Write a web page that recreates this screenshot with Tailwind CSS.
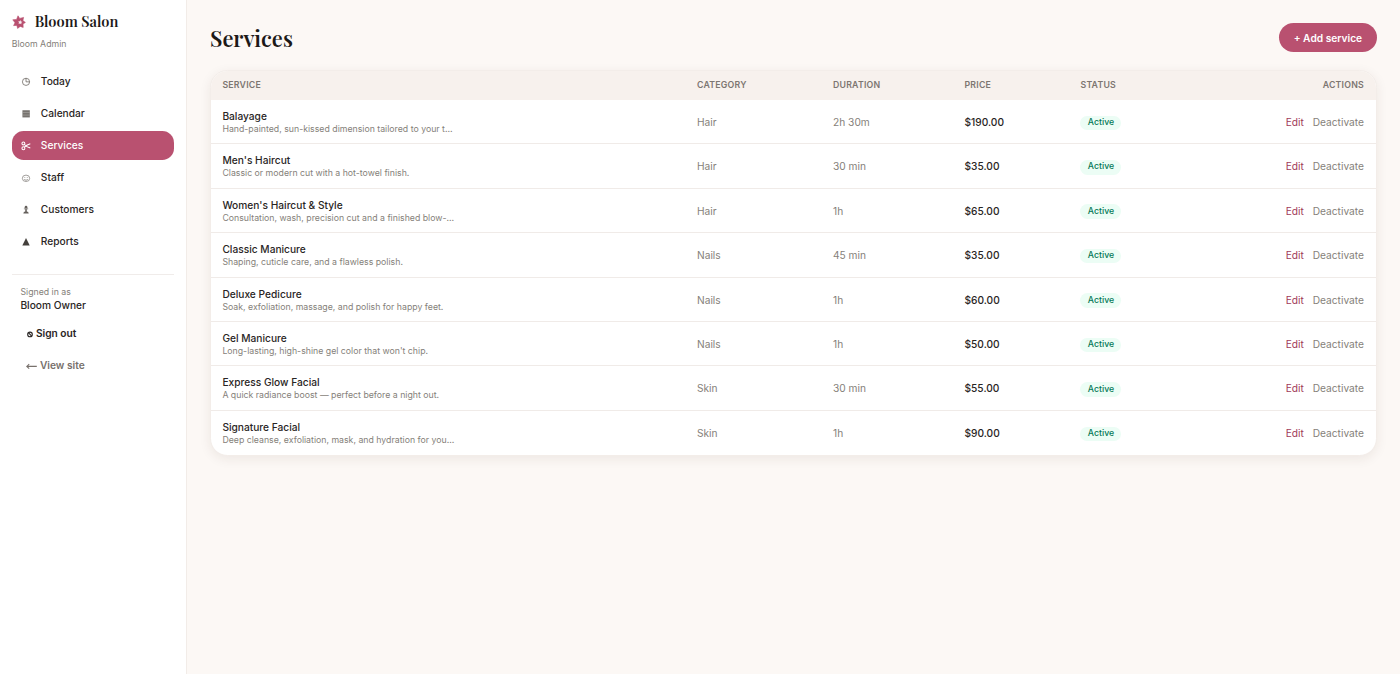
<!DOCTYPE html>
<html lang="en" class="text-[11.6667px]">
<head>
  <meta charset="UTF-8" />
  <meta name="viewport" content="width=device-width, initial-scale=1.0" />
  <title>Services · Bloom Salon</title>
  <script src="https://cdn.jsdelivr.net/npm/@tailwindcss/browser@4"></script>
</head>
<body class="flex h-screen overflow-hidden bg-[#fcf8f5] font-['Inter',sans-serif] text-sm text-[#292524]">

  <!-- Sidebar -->
  <aside class="flex w-64 shrink-0 flex-col border-r border-[#f2ece8] bg-white px-4 pt-4">
    <div class="mt-[3px] flex h-[14px] items-center gap-[9px]">
      <svg class="size-[14px] shrink-0" viewBox="0 0 14 14">
        <path d="M6 .8 7.7 3.4 11.6 2.4 10.9 5.6 13.4 7.4 11 9 11.2 12.4 8.2 11.4 5.6 13.4 4.9 10.4 1.6 10.6 3 7.8.8 4.8 4.6 4.4Z" fill="#b95170" stroke="#b95170" stroke-width=".6" stroke-linejoin="round" />
        <path d="M8.3 4.9 8.9 6.4 10.4 6.8 9.3 7.8 9.3 9.2 8 8.5 6.6 8.9 7 7.4 6.1 6.4 7.7 6.3Z" fill="#fff" opacity=".9" />
      </svg>
      <span class="whitespace-nowrap font-['Playfair_Display',serif] text-xl font-semibold leading-none text-[#1c1917]">Bloom Salon</span>
    </div>
    <p class="mt-[10px] text-xs text-[#857f7a]">Bloom Admin</p>

    <nav class="mt-[16.6px] flex flex-col gap-1 font-medium">
      <a class="flex items-center gap-3 rounded-2xl px-3 py-2.5">
        <svg class="size-4" viewBox="0 0 12 12" fill="none" stroke="#6b6661" stroke-width=".8"><circle cx="6.2" cy="6" r="3.7" /><path d="M6.2 2.3V6h3.7" /></svg>
        Today
      </a>
      <a class="flex items-center gap-3 rounded-2xl px-3 py-2.5">
        <svg class="size-4" viewBox="0 0 12 12"><rect x="2.5" y="2.3" width="7.6" height="7.4" fill="#77736f" /><path d="M2.5 4.6h7.6M2.5 7.3h7.6" stroke="#bbb8b5" stroke-width=".5" /></svg>
        Calendar
      </a>
      <a class="flex items-center gap-3 rounded-2xl bg-[#b95170] px-3 py-2.5 text-white">
        <svg class="size-4" viewBox="0 0 12 12" fill="none" stroke="#fff" stroke-width="1.1"><circle cx="3.5" cy="3.5" r="1.5" /><circle cx="3.5" cy="8.5" r="1.5" /><path d="M4.6 4.6C6 6.4 8 7.4 10.6 8.2M4.6 7.4C6 5.6 8 4.6 10.6 3.8" /></svg>
        Services
      </a>
      <a class="flex items-center gap-3 rounded-2xl px-3 py-2.5">
        <svg class="size-4" viewBox="0 0 12 12" fill="none" stroke="#77736f" stroke-width=".7"><ellipse cx="6.2" cy="6.5" rx="3.8" ry="3.3" /><path d="M4.3 7.3c.8 1.5 3 1.5 3.8 0M4.9 5.2v.8M7.5 5.2v.8" /></svg>
        Staff
      </a>
      <a class="flex items-center gap-3 rounded-2xl px-3 py-2.5">
        <svg class="size-4" viewBox="0 0 12 12" fill="#65605c"><circle cx="6.2" cy="3.3" r="1.4" /><path d="M4 4.6h4.4v.9H6.9l.2 2.6h1.2l.7 1.7H3.4l.7-1.7h1.2l.2-2.6H4Z" /></svg>
        Customers
      </a>
      <a class="flex items-center gap-3 rounded-2xl px-3 py-2.5">
        <svg class="size-4" viewBox="0 0 12 12"><path d="M6.2 2 10 9.8H2.4Z" fill="#44403c" /></svg>
        Reports
      </a>
    </nav>

    <div class="mt-[17.9px] border-t border-[#f0ecea] px-3 pt-[12px]">
      <p class="text-xs text-[#857f7a]">Signed in as</p>
      <p class="font-medium leading-[13.5px]">Bloom Owner</p>
      <div class="mt-[7px] flex h-[29px] items-center gap-[1.5px] pl-[6px] font-semibold">
        <svg class="size-[8px]" viewBox="0 0 8 8" fill="none" stroke="#292524" stroke-width="1.1"><circle cx="4" cy="4.4" r="2.3" /><path d="M2.4 2.6 5.7 6.2" /></svg>
        Sign out
      </div>
      <div class="mt-[3px] flex h-[29px] items-center gap-[2.5px] pl-[6px] font-semibold text-[#78716c]">
        <svg class="h-[8px] w-[11px]" viewBox="0 0 11 8" fill="none" stroke="#78716c" stroke-width="1.1"><path d="M10.8 4.4H.8M3.2 2.2.8 4.4l2.4 2.2" /></svg>
        View site
      </div>
    </div>
  </aside>

  <!-- Content -->
  <main class="flex-1 p-8">
    <div class="mb-6 flex items-center justify-between">
      <h1 class="font-['Playfair_Display',serif] text-3xl font-semibold leading-[26px] text-[#1c1917]">Services</h1>
      <button class="rounded-full bg-[#b95170] px-5 py-2.5 font-semibold text-white">+ Add service</button>
    </div>

    <div class="overflow-hidden rounded-3xl border border-[#f3ede9] bg-white shadow-[0_3px_12px_rgba(60,40,30,0.08)]">
      <div class="grid h-[28.9px] grid-cols-[475px_136px_131.5px_116px_1fr_auto] items-center bg-[#f7f1ed] pt-[1.6px] text-xs font-semibold tracking-wide text-[#7d7671]">
        <div class="pl-[11.4px]">SERVICE</div>
        <div class="pl-[11px]">CATEGORY</div>
        <div class="pl-[11px]">DURATION</div>
        <div class="pl-[11px]">PRICE</div>
        <div class="pl-[11px]">STATUS</div>
        <div class="pr-[11.7px]">ACTIONS</div>
      </div>
      <div id="services"></div>
    </div>
  </main>

  <script>
    const services = [
      ["Balayage", "Hand-painted, sun-kissed dimension tailored to your t…", "Hair", "2h 30m", "$190.00"],
      ["Men's Haircut", "Classic or modern cut with a hot-towel finish.", "Hair", "30 min", "$35.00"],
      ["Women's Haircut & Style", "Consultation, wash, precision cut and a finished blow-…", "Hair", "1h", "$65.00"],
      ["Classic Manicure", "Shaping, cuticle care, and a flawless polish.", "Nails", "45 min", "$35.00"],
      ["Deluxe Pedicure", "Soak, exfoliation, massage, and polish for happy feet.", "Nails", "1h", "$60.00"],
      ["Gel Manicure", "Long-lasting, high-shine gel color that won't chip.", "Nails", "1h", "$50.00"],
      ["Express Glow Facial", "A quick radiance boost — perfect before a night out.", "Skin", "30 min", "$55.00"],
      ["Signature Facial", "Deep cleanse, exfoliation, mask, and hydration for you…", "Skin", "1h", "$90.00"],
    ];

    document.getElementById("services").innerHTML = services.map(([name, desc, category, duration, price]) => `
      <div class="grid h-[44.45px] grid-cols-[475px_136px_131.5px_116px_1fr_auto] items-center border-b border-[#f0ebe8] pt-[1px] last:border-b-0 last:pt-0">
        <div class="pl-[11.4px]">
          <p class="font-medium leading-[14px]">${name.replace("&", "&amp;")}</p>
          <p class="text-xs leading-[12.4px] text-[#857f7a]">${desc}</p>
        </div>
        <div class="pl-[11px] text-[#857f7a]">${category}</div>
        <div class="pl-[11px] text-[#857f7a]">${duration}</div>
        <div class="pl-[11px] font-medium">${price}</div>
        <div class="pl-[11px]"><span class="inline-block rounded-full bg-[#ecfdf5] px-2.5 py-0.5 text-xs font-medium text-[#047857]">Active</span></div>
        <div class="flex gap-3 pr-[11.7px]"><a class="text-[#9f3a58]">Edit</a><a class="text-[#857f7a]">Deactivate</a></div>
      </div>`).join("");
  </script>
</body>
</html>
